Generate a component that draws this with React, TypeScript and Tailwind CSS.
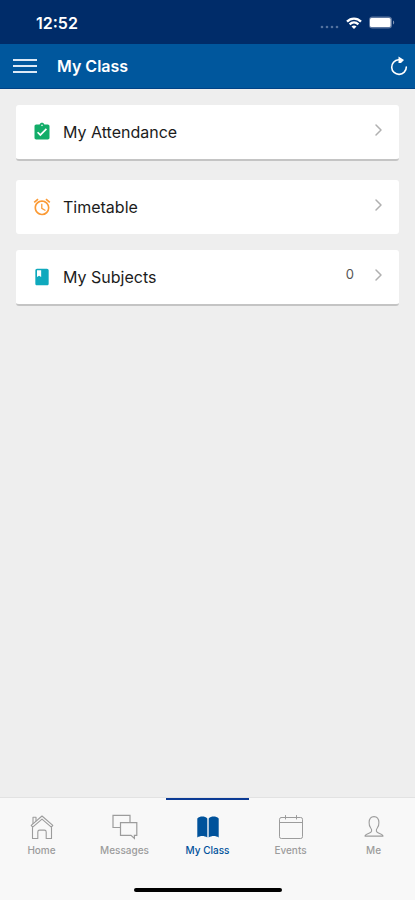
import type { ReactNode } from 'react';
import { MdAlarm, MdAssignmentTurnedIn, MdClass } from 'react-icons/md';

type Row = { label: string; icon: ReactNode; count?: number; card: string };

const rows: Row[] = [
  {
    label: 'My Attendance',
    icon: <MdAssignmentTurnedIn className="size-5 text-[#12ad69]" />,
    card: 'h-14 mb-[19px] border-b-2 border-[#c4c4c4]',
  },
  {
    label: 'Timetable',
    icon: <MdAlarm className="size-5 text-[#fb9a35]" />,
    card: 'h-[54px] mb-4',
  },
  {
    label: 'My Subjects',
    icon: <MdClass className="size-5 text-[#0fa9bd]" />,
    count: 0,
    card: 'h-14 border-b-2 border-[#c4c4c4]',
  },
];

const stroke = {
  fill: 'none',
  stroke: 'currentColor',
  strokeLinecap: 'round',
  strokeLinejoin: 'round',
} as const;

const HomeIcon = () => (
  <svg viewBox="0 0 28 28" className="size-7" strokeWidth="1.1" {...stroke}>
    <path d="M3.2 12.4 14 3l10.8 9.4-1.5 1.8L14 6.100l-9.300 8.100-1.500-1.800Z" />
    <path d="M5 10.500V4.300h3v3.500" />
    <path d="M4.500 14.500v11h5.300v-6.600c0-1 .7-1.800 1.800-1.800h4.800c1.100 0 1.800.8 1.800 1.800v6.600h5.300v-11" />
  </svg>
);

const MessagesIcon = () => (
  <svg viewBox="0 0 28 28" className="size-7" strokeWidth="1.2" fill="none" stroke="currentColor">
    <path d="M9.5 14.500H2V2.400h17v7.300" />
    <path d="M9.500 9.700h16.300v12.600h-2.400v3.100l-3.400-3.100H9.500V9.700Z" />
  </svg>
);

const BookIcon = () => (
  <svg viewBox="0 0 28 28" className="size-7" fill="currentColor">
    <path d="M3.300 5.400C6 3 10.800 3 13.300 5.400v19.100c-3-2-7-2-10 0V5.400Z" />
    <path d="M14.700 5.400C17.200 3 22 3 24.700 5.400v19.100c-3-2-7-2-10 0V5.400Z" />
  </svg>
);

const EventsIcon = () => (
  <svg viewBox="0 0 28 28" className="size-7" strokeWidth="1" {...stroke}>
    <rect x="2.500" y="4.500" width="23" height="21" rx="1.800" />
    <path d="M2.500 9.500h23M8.500 2.500v3.500M19.500 2.500v3.500" />
  </svg>
);

const MeIcon = () => (
  <svg viewBox="0 0 28 28" className="size-7" strokeWidth="1.1" {...stroke}>
    <path d="M11.600 18.200c.3-1.500-.1-2.200-.9-3.200-1.100-1.400-1.700-3-1.600-5.400.1-3.500 1.700-6 4.900-6s4.800 2.500 4.900 6c.1 2.400-.5 4-1.600 5.400-.8 1-1.200 1.700-.9 3.200.4 2.500 6.400 2 6.600 4.900H5c.2-2.900 6.200-2.400 6.600-4.900Z" />
  </svg>
);

const tabs = [
  { label: 'Home', icon: <HomeIcon /> },
  { label: 'Messages', icon: <MessagesIcon /> },
  { label: 'My Class', icon: <BookIcon />, active: true },
  { label: 'Events', icon: <EventsIcon /> },
  { label: 'Me', icon: <MeIcon /> },
];

function StatusBar() {
  return (
    <div className="h-11 pt-px pl-9 pr-5 flex items-center justify-between bg-[#002c69] text-white">
      <span className="text-base font-semibold">12:52</span>
      <div className="flex items-center gap-1.5">
        <svg viewBox="0 0 20 4" className="w-5 h-1 mt-2" fill="#53729f">
          <circle cx="2" cy="2" r="1.3" />
          <circle cx="7" cy="2" r="1.3" />
          <circle cx="12" cy="2" r="1.3" />
          <circle cx="17" cy="2" r="1.3" />
        </svg>
        <svg viewBox="0 0 16 12" className="w-4 h-3" fill="none" stroke="currentColor" strokeWidth="2.3">
          <path d="M1 4.600C5 .6 11 .6 15 4.600M3.600 7.300c2.600-2.400 6.200-2.400 8.800 0" />
          <path d="M8 12 5.500 9.500c1.400-1.300 3.600-1.300 5 0Z" fill="currentColor" stroke="none" />
        </svg>
        <svg viewBox="0 0 27 13" className="w-[27px] h-[13px]">
          <rect x="1" y=".5" width="23" height="12" rx="3.5" fill="#5f79a1" />
          <rect x="2" y="2" width="20.500" height="9" rx="1.5" fill="#fff" />
          <path d="M25 4.500c1.600.7 1.600 3.300 0 4Z" fill="#8094b4" />
        </svg>
      </div>
    </div>
  );
}

function Header() {
  return (
    <header className="h-[45px] px-3 flex items-center bg-[#00579d] border-b border-[#004286] text-white">
      <button type="button" aria-label="Menu">
        <svg viewBox="0 0 26 16" className="w-[26px] h-4" stroke="#dce9f6" strokeWidth="2">
          <path d="M1 2h24M1 8h24M1 14h24" />
        </svg>
      </button>
      <h1 className="ml-[19px] flex-1 text-base font-semibold">My Class</h1>
      <button type="button" aria-label="Refresh" className="-mr-1.5">
        <svg viewBox="0 0 20 22" className="w-5 h-[22px]" fill="none" stroke="currentColor" strokeWidth="1.6">
          <path d="M9.500 4.800A7.300 7.300 0 1 0 17.300 12" strokeLinecap="round" />
          <path d="M9.500 1.500v6.500h2.500L15 5Z" fill="currentColor" stroke="none" />
        </svg>
      </button>
    </header>
  );
}

export default function App() {
  return (
    <div className="min-h-screen flex flex-col bg-[#eeeeee] font-['Inter',sans-serif]">
      <StatusBar />
      <Header />

      <main className="flex-1 p-4">
        {rows.map((r) => (
          <a
            key={r.label}
            href="#"
            className={`flex items-center pl-4 pr-[13px] bg-white rounded-[3px] text-base text-[#1c1c1c] ${r.card}`}
          >
            {r.icon}
            <span className="ml-[11px] flex-1">{r.label}</span>
            <span className="flex items-center mb-1">
              {r.count !== undefined && <span className="mr-[18px] text-[13px] text-[#555]">{r.count}</span>}
              <svg viewBox="0 0 14 14" className="size-3.5" strokeWidth="1.5" {...stroke} stroke="#b0b0b0">
                <path d="m4 2 5 5-5 5" />
              </svg>
            </span>
          </a>
        ))}
      </main>

      <footer className="bg-[#f8f8f8] border-t border-[#e2e2e2]">
        <nav className="flex">
          {tabs.map((t) => (
            <a
              key={t.label}
              href="#"
              className={`flex-1 h-[74px] pt-[13px] flex flex-col items-center gap-[3px] border-t-2 text-[10px] leading-3 font-medium ${
                t.active ? 'border-[#0b3a94] text-[#00529b]' : 'border-transparent text-[#9c9c9c]'
              }`}
            >
              {t.icon}
              {t.label}
            </a>
          ))}
        </nav>
        <div className="h-7 pt-4">
          <div className="mx-auto w-[148px] h-1 rounded-full bg-black" />
        </div>
      </footer>
    </div>
  );
}
